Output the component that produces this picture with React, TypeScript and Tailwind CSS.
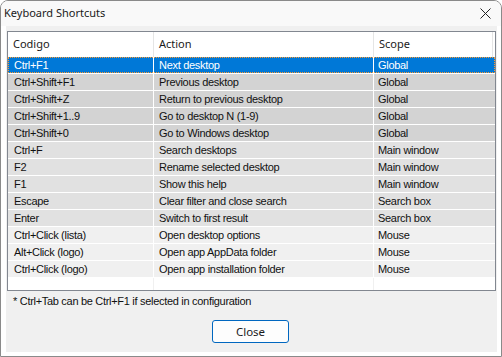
import React from 'react';

type Row = { code: string; action: string; scope: string; tone: 'global' | 'main' | 'mouse' };

const rows: Row[] = [
  { code: 'Ctrl+F1', action: 'Next desktop', scope: 'Global', tone: 'global' },
  { code: 'Ctrl+Shift+F1', action: 'Previous desktop', scope: 'Global', tone: 'global' },
  { code: 'Ctrl+Shift+Z', action: 'Return to previous desktop', scope: 'Global', tone: 'global' },
  { code: 'Ctrl+Shift+1..9', action: 'Go to desktop N (1-9)', scope: 'Global', tone: 'global' },
  { code: 'Ctrl+Shift+0', action: 'Go to Windows desktop', scope: 'Global', tone: 'global' },
  { code: 'Ctrl+F', action: 'Search desktops', scope: 'Main window', tone: 'main' },
  { code: 'F2', action: 'Rename selected desktop', scope: 'Main window', tone: 'main' },
  { code: 'F1', action: 'Show this help', scope: 'Main window', tone: 'main' },
  { code: 'Escape', action: 'Clear filter and close search', scope: 'Search box', tone: 'main' },
  { code: 'Enter', action: 'Switch to first result', scope: 'Search box', tone: 'main' },
  { code: 'Ctrl+Click (lista)', action: 'Open desktop options', scope: 'Mouse', tone: 'mouse' },
  { code: 'Alt+Click (logo)', action: 'Open app AppData folder', scope: 'Mouse', tone: 'mouse' },
  { code: 'Ctrl+Click (logo)', action: 'Open app installation folder', scope: 'Mouse', tone: 'mouse' },
];

const toneBg: Record<Row['tone'], string> = {
  global: 'bg-[#d3d3d3]',
  main: 'bg-[#e1e1e1]',
  mouse: 'bg-[#f0f0f0]',
};

const ui = { fontFamily: '"Noto Sans", "Open Sans", sans-serif' };
const list = { fontFamily: '"Liberation Sans", Arial, sans-serif' };

export default function App() {
  return (
    <div className="w-[502px] h-[357px] bg-white border border-[#8a8a8a] rounded-t-[8px] flex flex-col overflow-hidden">
      {/* title bar */}
      <div className="h-[25px] flex items-center justify-between pl-[3px] pr-[10px] bg-[#f9f9f9]" style={ui}>
        <span className="text-[11px] text-[#1a1a1a]">Keyboard Shortcuts</span>
        <svg width="11" height="11" viewBox="0 0 11 11" className="text-[#222]">
          <path d="M0.5 0.5 L10.5 10.5 M10.5 0.5 L0.5 10.5" stroke="currentColor" strokeWidth="1" />
        </svg>
      </div>

      {/* client */}
      <div className="flex-1 mx-[5px] mb-[4px] mr-[4px] bg-[#f0f0f0] flex flex-col pt-[5px] px-[1px]">
        <div className="h-[260px] bg-white border border-[#828790] flex flex-col overflow-hidden">
          {/* header */}
          <div className="h-[25px] grid grid-cols-[146px_220px_119px_1fr] text-[11px] text-[#1a1a1a]" style={ui}>
            <div className="border-r border-[#e5e5e5] flex items-center pl-[5px]">Codigo</div>
            <div className="border-r border-[#e5e5e5] flex items-center pl-[5px]">Action</div>
            <div className="border-r border-[#e5e5e5] flex items-center pl-[5px]">Scope</div>
            <div />
          </div>

          {rows.map((r, i) => {
            const sel = i === 0;
            return (
              <div
                key={r.code}
                className={`h-[17px] grid grid-cols-[146px_220px_1fr] border-b border-white text-[11px] tracking-[-0.3px] leading-[16px] relative ${
                  sel ? 'bg-[#0078d7] text-white' : `${toneBg[r.tone]} text-[#111]`
                }`}
                style={list}
              >
                <div className="border-r border-white pl-[6px] whitespace-nowrap">{r.code}</div>
                <div className="border-r border-white pl-[5px] whitespace-nowrap">{r.action}</div>
                <div className="pl-[4px] mr-[2px] whitespace-nowrap">{r.scope}</div>
                {sel && (
                  <div className="absolute inset-0 border border-dotted border-[#ff9a2e] pointer-events-none" />
                )}
              </div>
            );
          })}

          <div className="flex-1 grid grid-cols-[146px_220px_1fr]">
            <div className="border-r border-[#f0f0f0]" />
            <div className="border-r border-[#f0f0f0]" />
            <div />
          </div>
        </div>

        <div className="h-[21px] flex items-center pl-[6px] text-[11px] tracking-[-0.3px] text-[#111]" style={list}>
          * Ctrl+Tab can be Ctrl+F1 if selected in configuration
        </div>

        <div className="flex justify-center pt-[8px] pr-[2px]">
          <button
            className="w-[77px] h-[23px] rounded-[3px] border border-[#0067c0] bg-[#fdfdfd] text-[11.5px] text-[#1a1a1a] flex items-center justify-center"
            style={ui}
          >
            Close
          </button>
        </div>
      </div>
    </div>
  );
}
